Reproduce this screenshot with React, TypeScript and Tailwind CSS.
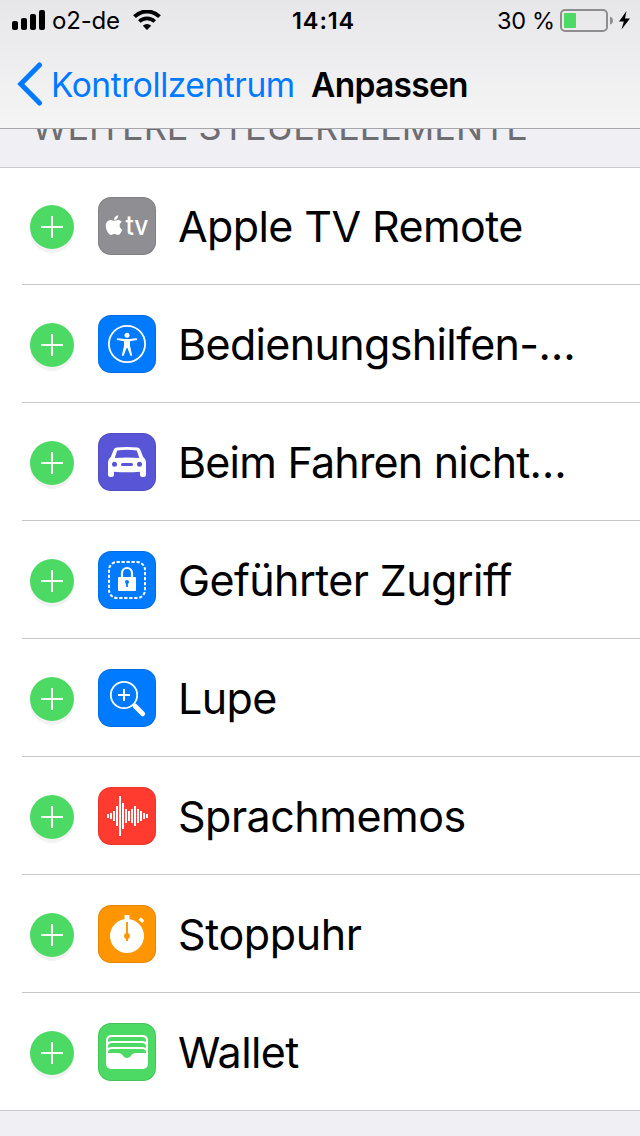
import type { ReactNode } from 'react';
import { FaApple } from 'react-icons/fa';

type Item = { label: string; bg: string; text: string; icon: ReactNode };

function Glyph({ children }: { children: ReactNode }) {
  return (
    <svg viewBox="0 0 58 58" className="h-[58px] w-[58px]" fill="none">
      {children}
    </svg>
  );
}

const waveHalfHeights = [2, 3, 5, 10, 20, 13, 7, 5, 7, 10, 7, 5, 3, 2];

const items: Item[] = [
  {
    label: 'Apple TV Remote',
    bg: 'bg-[#8e8e93]',
    text: 'tracking-[-0.6px]',
    icon: (
      <Glyph>
        <FaApple x={4.8} y={16.8} size={22.5} color="#fff" />
        <text x="27.5" y="38" fill="#fff" fontSize="26.5" fontWeight="500" textLength="23" lengthAdjust="spacingAndGlyphs">
          tv
        </text>
      </Glyph>
    ),
  },
  {
    label: 'Bedienungshilfen-…',
    bg: 'bg-[#007aff]',
    text: 'tracking-[-0.65px]',
    icon: (
      <Glyph>
        <circle cx="29" cy="29" r="18.1" stroke="#fff" strokeWidth="1.8" />
        <circle cx="29" cy="20.3" r="2.5" fill="#fff" />
        <path
          d="M19.6 23.3 26.5 24h5l6.9-.7c1 0 1.2 1.3.2 1.6L32 26.3v4.4l2 9c.2 1.2-1.3 1.7-1.8.6L29.4 33h-.8l-2.8 7.3c-.5 1.1-2 .6-1.8-.6l2-9v-4.4l-6.6-1.4c-1-.3-.8-1.6.2-1.6Z"
          fill="#fff"
        />
      </Glyph>
    ),
  },
  {
    label: 'Beim Fahren nicht…',
    bg: 'bg-[#5856d6]',
    text: 'tracking-[-0.8px]',
    icon: (
      <Glyph>
        <path
          fill="#fff"
          fillRule="evenodd"
          d="M18.5 14.6Q29 13.4 39.5 14.6 41.5 15 42.200 16.500L45.200 24Q48 26 48 29V41.500Q48 44 45.500 44H44.500Q42 44 42 41.500V38.700Q29 39.700 16 38.700V41.500Q16 44 13.500 44H12.500Q10 44 10 41.500V29Q10 26 12.800 24L15.800 16.500Q16.500 15 18.5 14.6ZM19.200 17.400 16.700 25Q29 24 41.300 25L38.800 17.400Q29 16.2 19.200 17.400ZM16.500 28.800a2.500 2.500 0 1 0 0 5 2.500 2.500 0 0 0 0-5ZM41.500 28.800a2.500 2.500 0 1 0 0 5 2.500 2.500 0 0 0 0-5ZM24.500 30a1.500 1.500 0 0 0 0 3h9a1.500 1.500 0 0 0 0-3Z"
        />
      </Glyph>
    ),
  },
  {
    label: 'Geführter Zugriff',
    bg: 'bg-[#007aff]',
    text: 'tracking-[-0.6px]',
    icon: (
      <Glyph>
        <rect x="11" y="11" width="36" height="36" rx="8" stroke="#fff" strokeWidth="2" strokeDasharray="3.25 1.75" strokeDashoffset="0.5" />
        <path d="M24 27v-5a5 5 0 0 1 10 0v5" stroke="#fff" strokeWidth="2.200" />
        <rect x="20" y="26" width="18" height="14" rx="1" fill="#fff" />
        <circle cx="29" cy="31" r="2" fill="#007aff" />
        <path d="M29 31v5" stroke="#007aff" strokeWidth="1.800" />
      </Glyph>
    ),
  },
  {
    label: 'Lupe',
    bg: 'bg-[#007aff]',
    text: 'tracking-[-0.6px]',
    icon: (
      <Glyph>
        <circle cx="26" cy="26" r="13.200" stroke="#fff" strokeWidth="1.800" />
        <path d="M26 20v12M20 26h12" stroke="#fff" strokeWidth="2" />
        <path d="m35.300 35.300 2 2" stroke="#fff" strokeWidth="3.500" />
        <path d="m37.200 37.200 7.500 7.500" stroke="#fff" strokeWidth="4.800" strokeLinecap="round" />
      </Glyph>
    ),
  },
  {
    label: 'Sprachmemos',
    bg: 'bg-[#ff3b30]',
    text: 'tracking-[-0.5px]',
    icon: (
      <Glyph>
        {waveHalfHeights.map((h, i) => (
          <rect key={i} x={9 + i * 3} y={29 - h} width="2" height={h * 2} fill="#fff" />
        ))}
      </Glyph>
    ),
  },
  {
    label: 'Stoppuhr',
    bg: 'bg-[#ff9500]',
    text: 'tracking-[-0.4px]',
    icon: (
      <Glyph>
        <circle cx="29" cy="31" r="17" fill="#fff" />
        <rect x="26.500" y="10" width="5" height="6" rx="0.800" fill="#fff" />
        <rect x="41" y="13.500" width="5" height="3.400" rx="0.800" fill="#fff" transform="rotate(42 43.500 15.200)" />
        <path d="M29 17v19" stroke="#ff9500" strokeWidth="1.900" />
        <circle cx="29" cy="31" r="2.900" fill="#ff9500" />
      </Glyph>
    ),
  },
  {
    label: 'Wallet',
    bg: 'bg-[#4cd964]',
    text: 'tracking-[-0.6px]',
    icon: (
      <Glyph>
        <rect x="8" y="12" width="42" height="34" rx="5" fill="#fff" />
        <path
          fill="#4cd964"
          d="M10 18v-.5Q10 14 14 14h30q4 0 4 3.500v.5q0 1-1 .700Q46 18 44 18H14q-2 0-3 .700Q10 19 10 18ZM10 24v-.5Q10 20 14 20h30q4 0 4 3.500v.5q0 1-1 .700Q46 24 44 24H14q-2 0-3 .700Q10 25 10 24ZM10 30v-.5Q10 26 14 26h30q4 0 4 3.500V30H38c-3 0-3.500 1-5 2.800-2.500 3-5.500 3-8 0C23.500 31 23 30 20 30Z"
        />
      </Glyph>
    ),
  },
];

function StatusBar() {
  return (
    <div className="flex h-10 items-center">
      <div className="flex w-[292px] items-center pl-3">
        <svg className="h-5 w-[33px] shrink-0" viewBox="0 0 33 20">
          <rect x="0" y="11" width="6" height="9" rx="2" />
          <rect x="9" y="8" width="6" height="12" rx="2" />
          <rect x="18" y="4" width="6" height="16" rx="2" />
          <rect x="27" y="0" width="6" height="20" rx="2" />
        </svg>
        <span className="mt-px ml-[7px] w-[74px] text-[24px] leading-10 tracking-[-0.2px] whitespace-nowrap">o2-de</span>
        <svg className="ml-[7px] h-5 w-7 shrink-0" viewBox="0 0 28 20" fill="none">
          <path d="M1.500 6.700a17.500 17.500 0 0 1 25 0" stroke="#000" strokeWidth="3.900" />
          <path d="M6.300 11.600a10.800 10.800 0 0 1 15.400 0" stroke="#000" strokeWidth="3.600" />
          <path d="M14 20l-4.200-4.200a6 6 0 0 1 8.400 0Z" fill="#000" />
        </svg>
      </div>
      <span className="mt-px w-[205px] text-[23.5px] leading-10 font-semibold tracking-[0.9px] whitespace-nowrap">14:14</span>
      <span className="mt-px w-[63px] text-[23.5px] leading-10 tracking-[-0.3px] whitespace-nowrap">30 %</span>
      <svg className="h-6 w-[72px] shrink-0" viewBox="0 0 72 24" fill="none">
        <rect x="1" y="2" width="46" height="21" rx="4" stroke="#8e8e90" strokeWidth="2" />
        <rect x="4" y="5" width="12" height="15" rx="1" fill="#4cd964" />
        <path d="M50 8.500q3 1 3 4t-3 4Z" fill="#8e8e90" />
        <path d="M66.500 3 59 13.500h4.800L61.500 21.500 70 10.500h-5Z" fill="#000" />
      </svg>
    </div>
  );
}

function Row({ item, last }: { item: Item; last: boolean }) {
  return (
    <li className={last ? 'h-[118px]' : 'h-[118px] pl-[22px]'}>
      <div className={last ? 'flex h-full items-start border-b border-[#c8c7cc] pl-[30px]' : 'flex h-full items-start border-b border-[#c8c7cc] pl-2'}>
        <button className="mt-[38px] h-11 w-11 shrink-0 rounded-full bg-[#4cd964] shadow-[0_4px_0_#f2f2f2]" aria-label={item.label}>
          <svg viewBox="0 0 44 44" className="h-11 w-11">
            <path d="M22 11v22M11 22h22" stroke="#fff" strokeWidth="2" />
          </svg>
        </button>
        <div className={`mt-[30px] ml-6 h-[58px] w-[58px] shrink-0 overflow-hidden rounded-[13px] inset-ring-1 inset-ring-black/10 ${item.bg}`}>
          {item.icon}
        </div>
        <span className={`mt-[29px] ml-[22px] text-[43px] leading-[60px] whitespace-nowrap ${item.text}`}>{item.label}</span>
      </div>
    </li>
  );
}

export default function App() {
  return (
    <div className="flex h-[1136px] w-[640px] flex-col overflow-hidden bg-[#efeff4] font-['Inter',sans-serif] text-black">
      <header className="h-[129px] shrink-0 border-b border-[#a7a7ab] bg-linear-to-b from-[#e7e7e9] to-[#f5f5f6]">
        <StatusBar />
        <div className="flex h-[88px] items-center">
          <svg className="ml-[17px] h-11 w-[26px] shrink-0" viewBox="0 0 26 44" fill="none">
            <path d="M22.500 3 3.800 22l18.700 19" stroke="#007aff" strokeWidth="5" strokeLinecap="round" />
          </svg>
          <span className="mt-px ml-2 w-[260px] text-[33.5px] leading-[44px] tracking-[-0.45px] whitespace-nowrap text-[#007aff]">Kontrollzentrum</span>
          <h1 className="mt-px text-[33.5px] leading-[44px] font-semibold tracking-[-0.7px] whitespace-nowrap">Anpassen</h1>
        </div>
      </header>
      <div className="flex h-[38px] shrink-0 items-end overflow-hidden pb-[22px] pl-8">
        <h2 className="text-[36px] leading-[36px] tracking-[0px] whitespace-nowrap text-[#6d6d72]">WEITERE STEUERELEMENTE</h2>
      </div>
      <ul className="shrink-0 bg-white shadow-[inset_0_1px_0_#c8c7cc]">
        {items.map((item, i) => (
          <Row key={item.label} item={item} last={i === items.length - 1} />
        ))}
      </ul>
    </div>
  );
}
